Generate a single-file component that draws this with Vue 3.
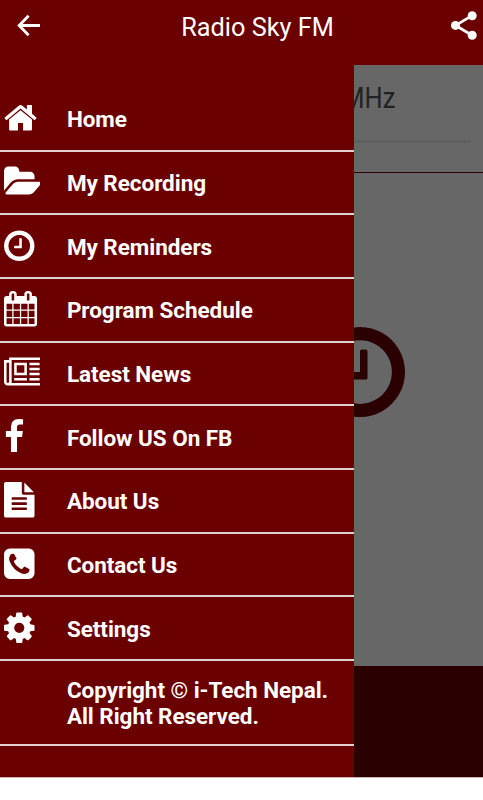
<template>
  <div class="app">
    <header class="toolbar">
      <button class="icon-button back" aria-label="Back">
        <svg viewBox="0 0 24 24">
          <path d="M23 11.5H2.5M11.6 1.8L2.2 11.5L11.6 21.2" />
        </svg>
      </button>
      <h1>Radio Sky FM</h1>
      <button class="icon-button share" aria-label="Share">
        <svg viewBox="0 0 26 29">
          <path d="M21 4.6L4.6 14.4L21 24.2" />
          <circle cx="21.2" cy="4.7" r="4.5" />
          <circle cx="4.5" cy="14.4" r="4.5" />
          <circle cx="21.2" cy="24.2" r="4.5" />
        </svg>
      </button>
    </header>

    <div class="body">
      <main class="content">
        <section class="frequency">
          <p><span>MHz</span></p>
        </section>
        <section class="reminder">
          <svg viewBox="128 128 1536 1536">
            <path :d="icons.clock" />
          </svg>
        </section>
        <footer class="player"></footer>
      </main>

      <nav class="drawer">
        <ul>
          <li v-for="item in items" :key="item.label">
            <svg class="menu-icon" :viewBox="`${item.left} 0 1816 1792`">
              <path :d="icons[item.icon]" />
            </svg>
            <span>{{ item.label }}</span>
          </li>
          <li class="copyright">
            <span>Copyright © i-Tech Nepal.<br />All Right Reserved.</span>
          </li>
        </ul>
      </nav>
    </div>
  </div>
</template>

<script setup>
// left is the x where the glyph's own box starts
const items = [
  { label: 'Home', icon: 'home', left: 0 },
  { label: 'My Recording', icon: 'folder', left: 64 },
  { label: 'My Reminders', icon: 'clock', left: 128 },
  { label: 'Program Schedule', icon: 'calendar', left: 64 },
  { label: 'Latest News', icon: 'news', left: 0 },
  { label: 'Follow US On FB', icon: 'facebook', left: 384 },
  { label: 'About Us', icon: 'file', left: 128 },
  { label: 'Contact Us', icon: 'phone', left: 128 },
  { label: 'Settings', icon: 'cog', left: 128 }
]

const icons = {
  home: 'M1408 992v480q0 26-19 45t-45 19h-384v-384h-256v384h-384q-26 0-45-19t-19-45v-480q0-1 .5-3t.5-3l575-474 575 474q1 2 1 6zm223-69l-62 74q-8 9-21 11h-3q-13 0-21-7l-692-577-692 577q-12 8-24 7-13-2-21-11l-62-74q-8-10-7-23.5t11-21.5l719-599q32-26 76-26t76 26l244 204v-195q0-14 9-23t23-9h192q14 0 23 9t9 23v408l219 182q10 8 11 21.5t-7 23.5z',
  folder: 'M1943 952q0 31-31 66l-336 396q-43 51-120.5 86.5t-143.5 35.5h-1088q-34 0-60.5-13t-26.5-43q0-31 31-66l336-396q43-51 120.5-86.5t143.5-35.5h1088q34 0 60.5 13t26.5 43zm-343-344v160h-832q-94 0-197 47.5t-164 119.5l-337 396-5 6q0-4-.5-12.5t-.5-12.5v-960q0-92 66-158t158-66h320q92 0 158 66t66 158v32h544q92 0 158 66t66 158z',
  clock: 'M1024 544v448q0 14-9 23t-23 9h-320q-14 0-23-9t-9-23v-64q0-14 9-23t23-9h224v-352q0-14 9-23t23-9h64q14 0 23 9t9 23zm416 352q0-148-73-273t-198-198-273-73-273 73-198 198-73 273 73 273 198 198 273 73 273-73 198-198 73-273zm224 0q0 209-103 385.5t-279.5 279.5-385.5 103-385.5-103-279.5-279.5-103-385.5 103-385.5 279.5-279.5 385.5-103 385.5 103 279.5 279.5 103 385.5z',
  calendar: 'M192 1664h288v-288h-288v288zm352 0h320v-288h-320v288zm-352-352h288v-320h-288v320zm352 0h320v-320h-320v320zm-352-384h288v-288h-288v288zm736 736h320v-288h-320v288zm-384-736h320v-288h-320v288zm768 736h288v-288h-288v288zm-384-352h320v-320h-320v320zm-352-864v-288q0-13-9.5-22.5t-22.5-9.5h-64q-13 0-22.5 9.5t-9.5 22.5v288q0 13 9.5 22.5t22.5 9.5h64q13 0 22.5-9.5t9.5-22.5zm736 864h288v-320h-288v320zm-384-384h320v-288h-320v288zm384 0h288v-288h-288v288zm32-480v-288q0-13-9.5-22.5t-22.5-9.5h-64q-13 0-22.5 9.5t-9.5 22.5v288q0 13 9.5 22.5t22.5 9.5h64q13 0 22.5-9.5t9.5-22.5zm384-64v1280q0 52-38 90t-90 38h-1408q-52 0-90-38t-38-90v-1280q0-52 38-90t90-38h128v-96q0-66 47-113t113-47h64q66 0 113 47t47 113v96h384v-96q0-66 47-113t113-47h64q66 0 113 47t47 113v96h128q52 0 90 38t38 90z',
  news: 'M1024 512h-384v384h384v-384zm128 640v128h-640v-128h640zm0-768v640h-640v-640h640zm640 768v128h-512v-128h512zm0-256v128h-512v-128h512zm0-256v128h-512v-128h512zm0-256v128h-512v-128h512zm-1536 960v-960h-128v960q0 26 19 45t45 19 45-19 19-45zm1664 0v-1088h-1536v1088q0 33-11 64h1483q26 0 45-19t19-45zm128-1216v1216q0 80-56 136t-136 56h-1664q-80 0-136-56t-56-136v-1088h256v-128h1792z',
  facebook: 'M1343 12v264h-157q-86 0-116 36t-30 108v189h293l-39 296h-254v759h-306v-759h-255v-296h255v-218q0-186 104-288.5t277-102.5q147 0 228 12z',
  file: 'M1596 476q14 14 28 36h-472v-472q22 14 36 28zm-476 164h544v1056q0 40-28 68t-68 28h-1344q-40 0-68-28t-28-68v-1600q0-40 28-68t68-28h800v544q0 40 28 68t68 28zm160 736v-64q0-14-9-23t-23-9h-704q-14 0-23 9t-9 23v64q0 14 9 23t23 9h704q14 0 23-9t9-23zm0-256v-64q0-14-9-23t-23-9h-704q-14 0-23 9t-9 23v64q0 14 9 23t23 9h704q14 0 23-9t9-23zm0-256v-64q0-14-9-23t-23-9h-704q-14 0-23 9t-9 23v64q0 14 9 23t23 9h704q14 0 23-9t9-23z',
  phone: 'M1408 1193q0-11-2-16t-18-16.5-40.5-25-47.5-26.5-45.5-25-28.5-15q-5-3-19-13t-25-15-21-5q-15 0-36.5 20.5t-39.5 45-38.5 45-33.5 20.5q-7 0-16.5-3.5t-15.5-6.5-17-9.5-14-8.5q-99-55-170-126.5t-127-170.5q-2-3-8.5-14t-9.5-17-6.5-15.5-3.5-16.5q0-13 20.5-33.5t45-38.5 45-39.5 20.5-36.5q0-10-5-21t-15-25-13-19q-3-6-15-28.5t-25-45.5-26.5-47.5-25-40.5-16.5-18-16-2q-48 0-101 22-46 21-80 94.5t-34 130.5q0 16 2.5 34t5 30.5 9 33 10 29.5 12.5 33 11 30q60 164 216.5 320.5t320.5 216.5q6 2 30 11t33 12.5 29.5 10 33 9 30.5 5 34 2.5q57 0 130.5-34t94.5-80q22-53 22-101zm256-777v960q0 119-84.5 203.5t-203.5 84.5h-960q-119 0-203.5-84.5t-84.5-203.5v-960q0-119 84.5-203.5t203.5-84.5h960q119 0 203.5 84.5t84.5 203.5z',
  cog: 'M1152 896q0-106-75-181t-181-75-181 75-75 181 75 181 181 75 181-75 75-181zm512-109v222q0 12-8 23t-20 13l-185 28q-19 54-39 91 35 50 107 138 10 12 10 25t-9 23q-27 37-99 108t-94 71q-12 0-26-9l-138-108q-44 23-91 38-16 136-29 186-7 28-36 28h-222q-14 0-24.5-8.5t-11.5-21.5l-28-184q-49-16-90-37l-141 107q-10 9-25 9-14 0-25-11-126-114-165-168-7-10-7-23 0-12 8-23 15-21 51-66.5t54-70.5q-27-50-41-99l-183-27q-13-2-21-12.5t-8-23.5v-222q0-12 8-23t19-13l186-28q14-46 39-92-40-57-107-138-10-12-10-24 0-10 9-23 26-36 98.5-107.5t94.5-71.5q13 0 26 10l138 107q44-23 91-38 16-136 29-186 7-28 36-28h222q14 0 24.5 8.5t11.5 21.5l28 184q49 16 90 37l142-107q9-9 24-9 13 0 25 10 129 119 165 170 7 8 7 22 0 12-8 23-15 21-51 66.5t-54 70.5q26 50 41 98l183 28q13 2 21 12.5t8 23.5z'
}
</script>

<style>
body {
  background-color: #fff;
}
</style>

<style scoped>
.app {
  width: 483px;
  height: 800px;
  overflow: hidden;
  background-color: #fff;
  font-family: Roboto, "Liberation Sans", sans-serif;
}

.toolbar {
  display: flex;
  align-items: center;
  justify-content: space-between;
  height: 65px;
  padding: 0 6px 14px 17px;
  box-sizing: border-box;
  background-color: #6b0000;
  color: #fff;
}

.toolbar h1 {
  margin: 5px 0 0 23px;
  font-size: 25.3px;
  font-weight: 400;
  line-height: 32px;
  white-space: nowrap;
}

.icon-button {
  padding: 0;
  border: none;
  background: none;
  cursor: pointer;
}

.icon-button svg {
  display: block;
  fill: none;
  stroke: #fff;
}

.back svg {
  width: 24px;
  height: 24px;
  stroke-width: 2.8;
}

.share svg {
  width: 26px;
  height: 29px;
  stroke-width: 2.8;
}

.share circle {
  fill: #fff;
  stroke: none;
}

.body {
  position: relative;
  height: 712px;
  border-bottom: 1px solid #c8b4b4;
}

.content {
  display: flex;
  flex-direction: column;
  height: 100%;
  background-color: #676767;
}

.frequency {
  height: 108px;
  padding: 16px 12px 0;
  box-sizing: border-box;
  border-bottom: 1px solid #2b0000;
}

.frequency p {
  height: 62px;
  margin: 0;
  padding-right: 76px;
  box-sizing: border-box;
  border-bottom: 3px solid #606060;
  color: #222;
  font-size: 29px;
  line-height: 34px;
  text-align: right;
}

.frequency span {
  display: inline-block;
  transform: scaleX(0.88);
  transform-origin: right;
}

.reminder {
  display: flex;
  flex: 1;
  justify-content: flex-end;
  padding: 154px 78px 0 0;
}

.reminder svg {
  width: 90px;
  height: 90px;
  fill: #2b0000;
}

.player {
  height: 111px;
  background-color: #2b0000;
}

.drawer {
  position: absolute;
  top: 0;
  left: 0;
  width: 354px;
  height: 100%;
  padding-top: 23.1px;
  box-sizing: border-box;
  background-color: #6b0000;
  color: #fff;
}

.drawer ul {
  margin: 0;
  padding: 0;
  list-style: none;
}

.drawer li {
  display: flex;
  align-items: center;
  height: 63.67px;
  padding-left: 3.6px;
  box-sizing: border-box;
  border-bottom: 2px solid #e0d0d0;
  font-size: 22.5px;
  font-weight: 700;
  line-height: 26.5px;
}

.drawer li span {
  padding-top: 1.2px;
  letter-spacing: -0.05px;
}

.menu-icon {
  width: 36.1px;
  height: 35.6px;
  margin: -1.4px 27.2px 0 0;
  fill: #fff;
}

.drawer .copyright {
  height: 85px;
  padding-left: 66.9px;
}
</style>
